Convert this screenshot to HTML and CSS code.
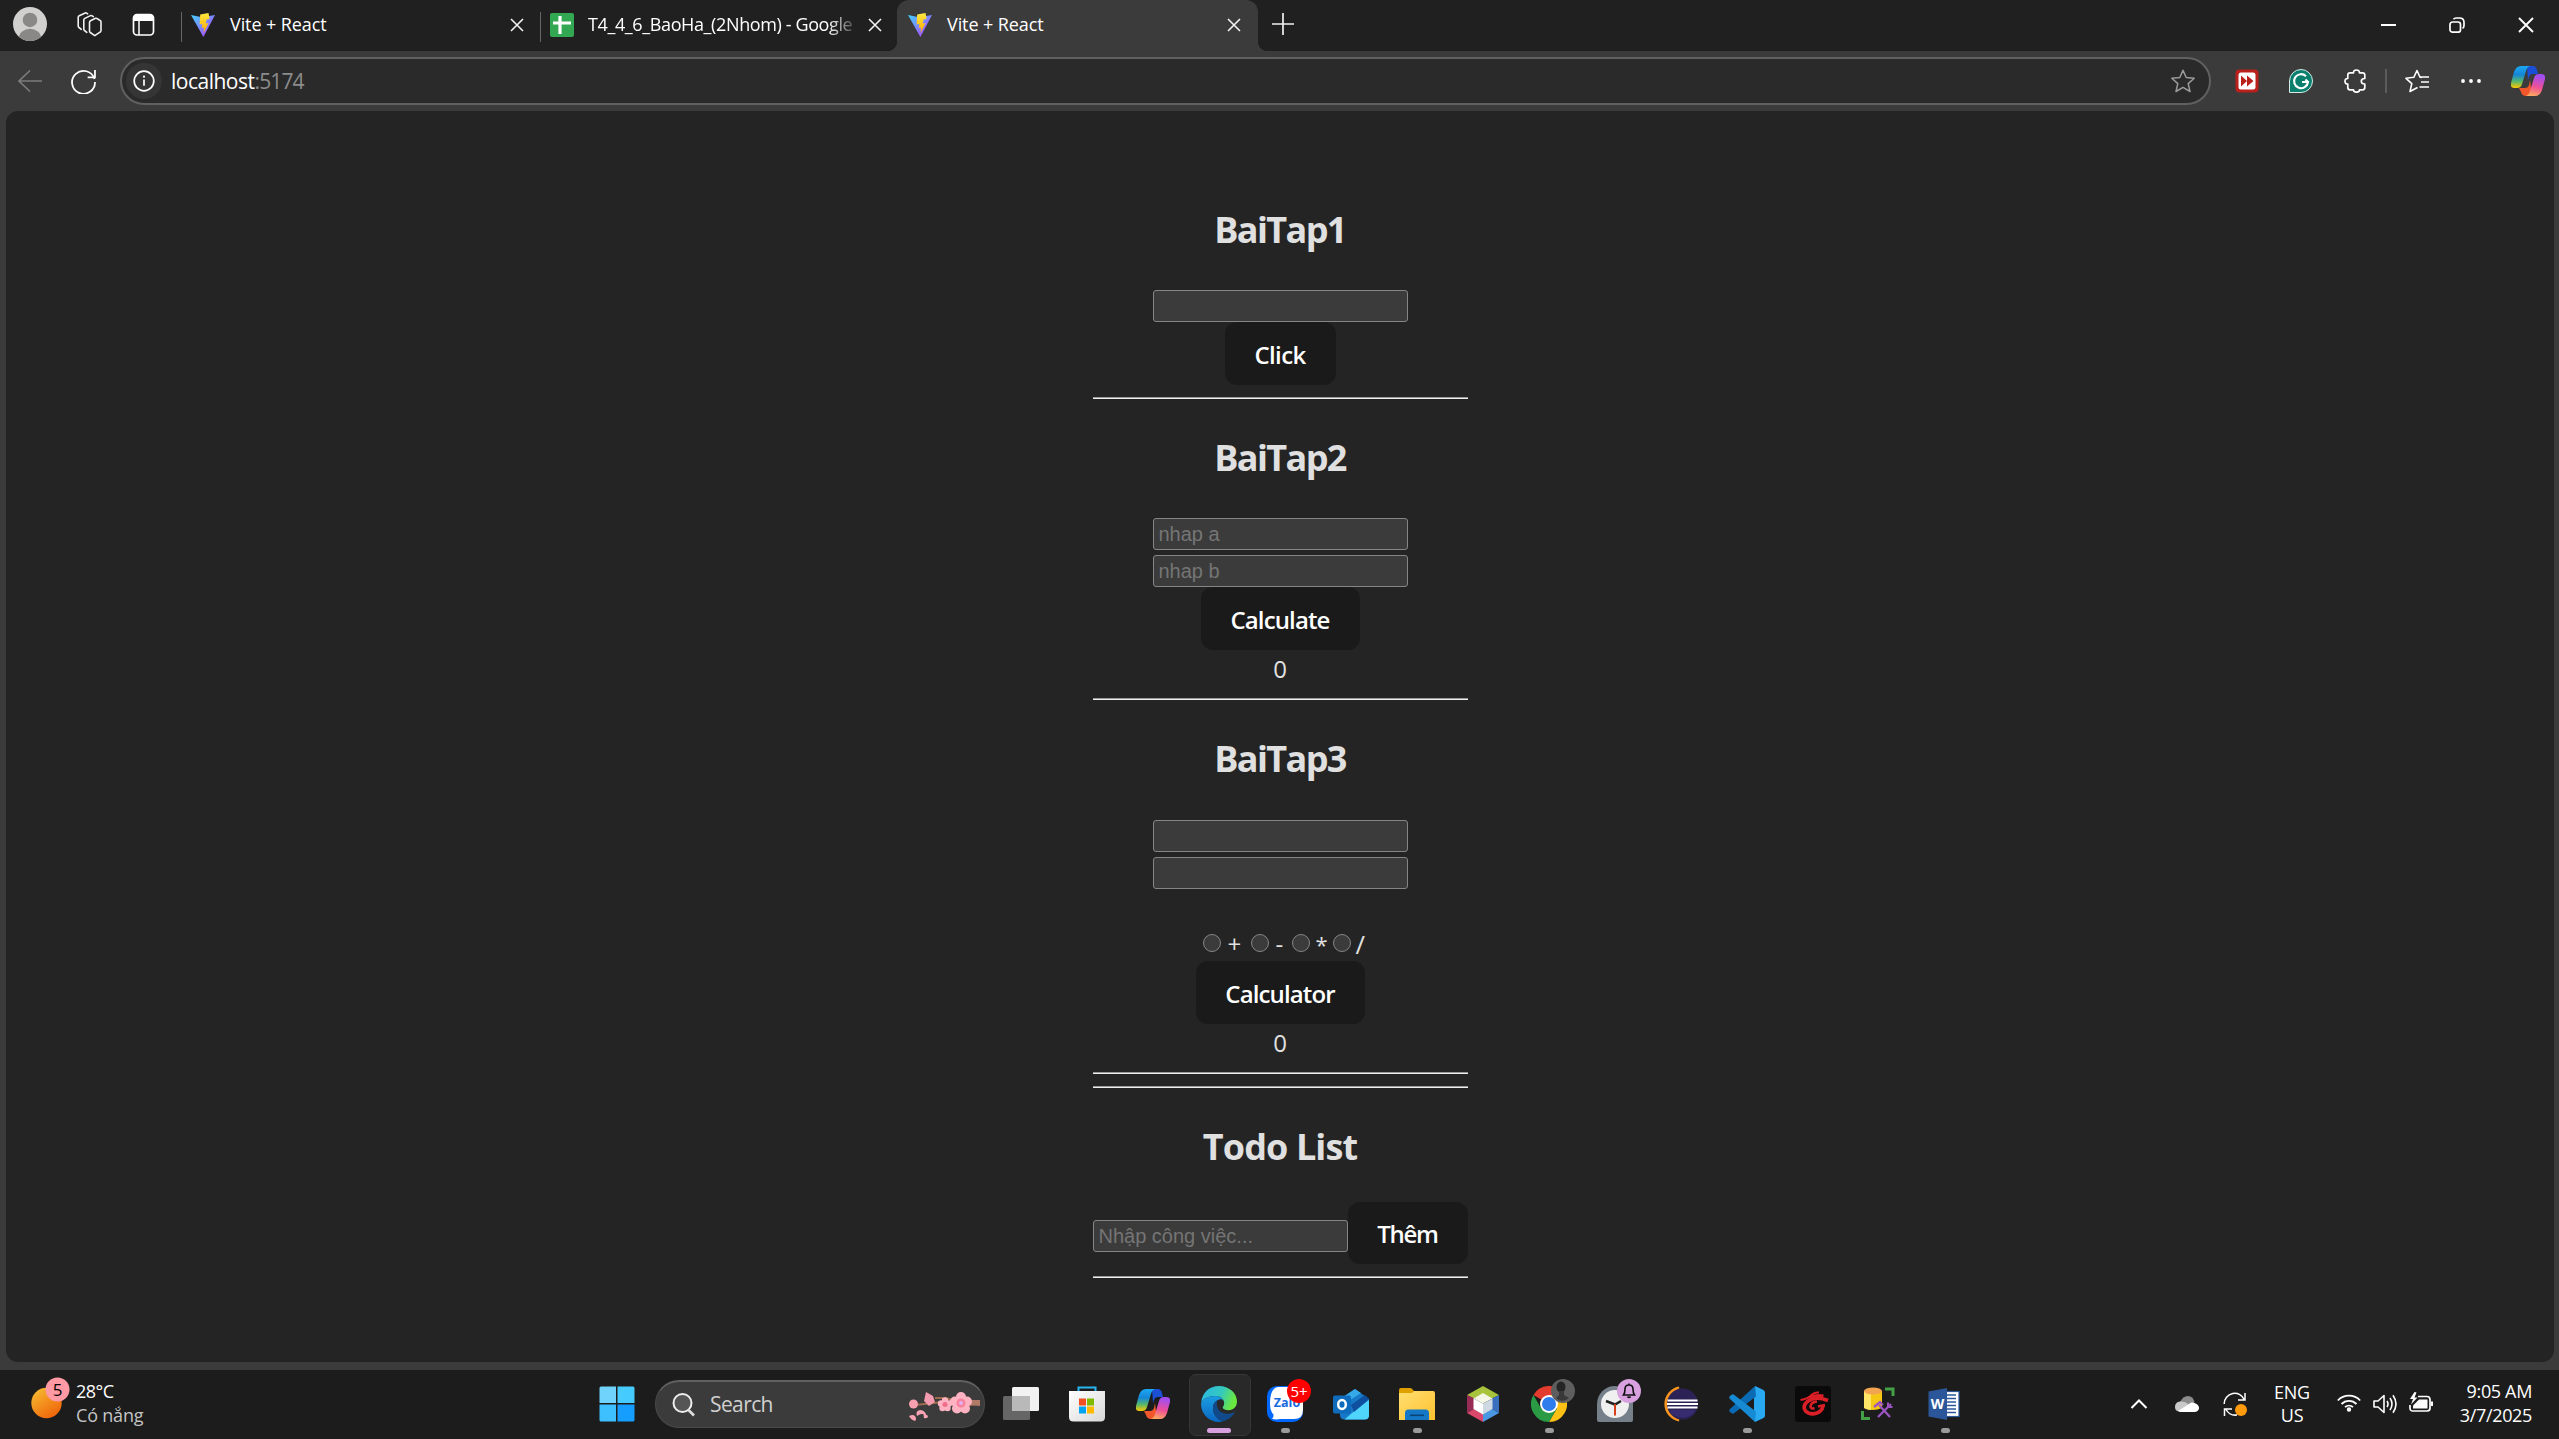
FILE: index.html
```html
<!DOCTYPE html>
<html lang="en">
<head>
<meta charset="utf-8">
<title>Vite + React</title>
<link rel="stylesheet" href="styles.css">
</head>
<body>
<svg class="defs" width="0" height="0">
  <defs>
    <linearGradient id="viteA" x1="0" y1="0" x2="1" y2="1"><stop offset="0" stop-color="#41d1ff"/><stop offset="1" stop-color="#bd34fe"/></linearGradient>
    <linearGradient id="viteB" x1="0" y1="0" x2="0" y2="1"><stop offset="0" stop-color="#ffea3f"/><stop offset="1" stop-color="#ffa800"/></linearGradient>
    <linearGradient id="cpA" x1="0" y1="0" x2="0" y2="1"><stop offset="0" stop-color="#1ba8f2"/><stop offset=".4" stop-color="#1586d8"/><stop offset=".7" stop-color="#57b86b"/><stop offset="1" stop-color="#ffc800"/></linearGradient>
    <linearGradient id="cpB" x1="0.2" y1="0" x2="0" y2="1"><stop offset="0" stop-color="#a24df0"/><stop offset=".5" stop-color="#ee5097"/><stop offset="1" stop-color="#ffb657"/></linearGradient>
    <linearGradient id="edgeA" x1="0" y1="0" x2="1" y2="0.3"><stop offset="0" stop-color="#29b6e8"/><stop offset=".6" stop-color="#35c9bd"/><stop offset="1" stop-color="#69e840"/></linearGradient>
    <linearGradient id="edgeB" x1="0" y1="0" x2="0" y2="1"><stop offset="0" stop-color="#1b9de2"/><stop offset="1" stop-color="#0a67c2"/></linearGradient>
    <linearGradient id="sun" x1="0" y1="0" x2=".7" y2="1"><stop offset="0" stop-color="#f7c234"/><stop offset="1" stop-color="#f0640a"/></linearGradient>
    <linearGradient id="folder" x1="0" y1="0" x2="1" y2="1"><stop offset="0" stop-color="#ffdf72"/><stop offset="1" stop-color="#ffc12e"/></linearGradient>
    <linearGradient id="paper" x1="0" y1="0" x2="1" y2="1"><stop offset="0" stop-color="#fff"/><stop offset="1" stop-color="#d8d8d8"/></linearGradient>
    <symbol id="vite" viewBox="0 0 24 24">
      <path d="M0 2 11 4.200 24 2 12.400 24Z" fill="url(#viteA)"/>
      <path d="M17.500 0 9.200 1.500 8.600 11.500 11.400 11 10.800 15 13 14.500 12.600 20 17.500 10 14.600 10.600 15.600 6.600 18.600 6.100Z" fill="url(#viteB)"/>
    </symbol>
    <symbol id="close" viewBox="0 0 14 14"><path d="M1 1 13 13M13 1 1 13" stroke="#f2f2f2" stroke-width="1.600" fill="none"/></symbol>
    <symbol id="copilot" viewBox="0 0 34 30">
      <path d="M12 0h10q3 0 4 4l1 4h-5q-3 0-4 3l-1 3-1-14Z" fill="#1a4fd6"/>
      <path d="M10 0h9q-3 1-4 5l-4 13q-1 4-5 4H3q-4 0-3-5L3 6Q5 0 10 0Z" fill="url(#cpA)"/>
      <path d="M8 22h6q3 0 4-3l1-5 2 16h-6q-4 0-5-4Z" fill="#f2572c"/>
      <path d="M24 30h-9q3-1 4-5l4-13q1-4 5-4h2q5 0 4 5l-3 11q-2 6-7 6Z" fill="url(#cpB)"/>
    </symbol>
  </defs>
</svg>

<header class="tabstrip">
  <svg class="avatar" viewBox="0 0 34 42" preserveAspectRatio="none"><clipPath id="av"><ellipse cx="17" cy="21" rx="17" ry="21"/></clipPath><g clip-path="url(#av)"><rect width="34" height="42" fill="#d2d0ce"/><ellipse cx="17" cy="16" rx="7.300" ry="9" fill="#8a8886"/><ellipse cx="17" cy="38" rx="11" ry="11" fill="#8a8886"/></g></svg>
  <svg class="workspaces" viewBox="0 0 25 25" fill="none" stroke="#f0f0f0" stroke-width="1.600" stroke-linejoin="round" stroke-linecap="round"><path d="M12.500 10.500Q12.500 9.300 13.500 8.800L18.500 6.300Q19.300 6 20 6.500L23.300 8.700Q24 9.200 24 10V18.500Q24 19.600 23 20.200L18.500 23.200Q17.700 23.700 17 23.100L13.300 20.500Q12.500 20 12.500 19ZM9.800 20.300 7.500 18.500Q6.800 18 6.800 17V8Q6.800 6.900 7.800 6.400L13.500 3.600Q14.300 3.300 15 3.800L16.300 4.600M4.300 17.300 2 15.500Q1.200 15 1.200 14V5.200Q1.200 4.200 2.200 3.700L8.200 1Q9 .7 9.700 1.200L10.600 1.800"/></svg>
  <svg class="tabactions" viewBox="0 0 24 24"><rect x="1.500" y="1.500" width="20" height="20.500" rx="3.500" fill="none" stroke="#fff" stroke-width="1.700"/><path d="M1.500 8V5Q1.500 1.500 5 1.500H18Q21.500 1.500 21.500 5V8Z" fill="#fff"/><path d="M7 8V22" stroke="#fff" stroke-width="1.500"/></svg>
  <i class="divider"></i>
  <div class="tab tab-first"><svg class="fav"><use href="#vite"/></svg><span class="tab-title t-vite">Vite + React</span><svg class="x"><use href="#close"/></svg></div>
  <i class="divider"></i>
  <div class="tab tab-second"><svg class="fav" viewBox="0 0 24 24"><rect width="24" height="24" rx="2" fill="#33a852"/><path d="M10 3V21M3 10H21" stroke="#fff" stroke-width="3.200"/></svg><span class="tab-title fade">T4_4_6_BaoHa_(2Nhom) - Google</span><svg class="x"><use href="#close"/></svg></div>
  <div class="tab active"><svg class="fav"><use href="#vite"/></svg><span class="tab-title t-vite">Vite + React</span><svg class="x"><use href="#close"/></svg></div>
  <svg class="newtab" viewBox="0 0 22 22"><path d="M11 0V22M0 11H22" stroke="#f0f0f0" stroke-width="1.700"/></svg>
  <div class="winctl">
    <svg viewBox="0 0 16 16"><path d="M1 8H16" stroke="#fff" stroke-width="2"/></svg>
    <svg viewBox="0 0 16 16" fill="none" stroke="#fff" stroke-width="1.700"><rect x="1" y="5" width="10.500" height="10.200" rx="2.500"/><path d="M4.500 2.200Q5.500 1 7 1H10.500Q15 1 15 5.500V8.500Q15 10.500 13.500 11.200"/></svg>
    <svg viewBox="0 0 16 16"><path d="M1 1 15 15M15 1 1 15" stroke="#fff" stroke-width="1.900"/></svg>
  </div>
</header>

<nav class="toolbar">
  <svg class="back" viewBox="0 0 24 24"><path d="M24 12H1M12 1.500 1 12 12 22.500" fill="none" stroke="#7c7c7c" stroke-width="1.600"/></svg>
  <svg class="reload" viewBox="0 0 24 24"><path d="M22.500 9.500A11 11 0 1 0 23 12.500M23 1V8H16" fill="none" stroke="#fff" stroke-width="1.700"/></svg>
  <div class="address">
    <span class="info"><svg viewBox="0 0 22 22"><circle cx="11" cy="11" r="9.800" fill="none" stroke="#fff" stroke-width="1.700"/><path d="M11 9.500V15.800" stroke="#fff" stroke-width="1.700"/><circle cx="11" cy="6.700" r="1.100" fill="#fff"/></svg></span>
    <span class="url"><b>localhost</b>:5174</span>
    <svg class="star" viewBox="0 0 24 24"><path d="M12 1.200 15.200 8.500 23.200 9.300 17.200 14.600 19 22.500 12 18.400 5 22.500 6.800 14.600.8 9.300 8.800 8.500Z" fill="none" stroke="#9a9a9a" stroke-width="1.500" stroke-linejoin="round"/></svg>
  </div>
  <svg class="ext e1" viewBox="0 0 24 24"><rect x=".5" y=".5" width="23" height="23" rx="4" fill="#b9201c"/><rect x="3.500" y="3.500" width="17" height="17" rx="2.500" fill="#fff"/><path d="M6 6.500 12 12 6 17.500ZM12 6.500 18.500 12 12 17.500Z" fill="#b9201c"/></svg>
  <svg class="ext e2" viewBox="0 0 24 24"><path d="M.5 23.500V12A11.500 11.500 0 1 1 12 23.500Z" fill="#0a7f6e" stroke="#d5ebe7"/><path d="M17 7.200A7 7 0 1 0 19 13H13M16.500 10.500 19 13" fill="none" stroke="#fff" stroke-width="2.100"/></svg>
  <svg class="ext e3" viewBox="0 0 24 24"><path d="M6 3.800H9.500Q9.500 1 12.500 1T15.500 3.800H18.500Q20.800 3.800 20.800 6V9.500Q17.300 9.500 17.300 12.200T20.800 15V18.500Q20.800 20.800 18.500 20.800H15.500Q15.500 23.200 12.500 23.200T9.500 20.800H6Q3.800 20.800 3.800 18.500V15Q1 15 1 12.200T3.800 9.500V6Q3.800 3.800 6 3.800Z" fill="none" stroke="#fff" stroke-width="1.700" stroke-linejoin="round"/></svg>
  <i class="sep"></i>
  <svg class="ext e4" viewBox="0 0 24 24"><path d="M17 8.400 15 8.300 12 1.500 8.800 8.300 1 9.300 6.800 14.600 5 22.500 12.500 18.500M14.500 8H24M16 13H24M14.500 18H24" fill="none" stroke="#fff" stroke-width="1.600" stroke-linejoin="round"/></svg>
  <svg class="ext e5" viewBox="0 0 24 24" fill="#fff"><circle cx="4" cy="12" r="1.900"/><circle cx="12" cy="12" r="1.900"/><circle cx="20" cy="12" r="1.900"/></svg>
  <svg class="cp"><use href="#copilot"/></svg>
</nav>

<div class="frame">
  <main class="page">
    <div class="column">
      <section>
        <h2>BaiTap1</h2>
        <input type="text">
        <button class="b1">Click</button>
      </section>
      <hr>
      <section>
        <h2>BaiTap2</h2>
        <input type="text" placeholder="nhap a">
        <input type="text" placeholder="nhap b" class="next">
        <button class="b2">Calculate</button>
        <output>0</output>
      </section>
      <hr>
      <section>
        <h2 class="tall">BaiTap3</h2>
        <input type="text">
        <input type="text" class="next">
        <div class="ops">
          <label class="o1"><i></i><span>+</span></label><label class="o2"><i></i><span>-</span></label><label class="o3"><i></i><span>*</span></label><label class="o4"><i></i><span>/</span></label>
        </div>
        <button class="b3">Calculator</button>
        <output>0</output>
      </section>
      <hr>
      <hr class="second">
      <section>
        <h2 class="todo">Todo List</h2>
        <div class="row"><input type="text" placeholder="Nhập công việc..."><button class="b4">Thêm</button></div>
      </section>
      <hr>
    </div>
  </main>
</div>

<footer class="taskbar">
  <div class="weather">
    <svg viewBox="0 0 40 46"><circle cx="15.500" cy="28" r="15.200" fill="url(#sun)"/><circle cx="26.500" cy="14.500" r="12" fill="#ff99a4"/><text x="26.500" y="20.500" text-anchor="middle" font-size="17">5</text></svg>
    <div class="two"><span class="w1">28°C</span><span class="w2">Có nắng</span></div>
  </div>
  <div class="apps">
    <span class="app"><svg viewBox="0 0 36 36"><path d="M.5 2q0-1.500 1.500-1.500H17V17H.5Z" fill="#6fd3fb"/><path d="M18.500.5H34q1.500 0 1.500 1.500V17H18.500Z" fill="#45cbfd"/><path d="M.5 18.500H17V35.500H2q-1.500 0-1.500-1.500Z" fill="#3dc0fd"/><path d="M18.500 18.500h17V34q0 1.500-1.500 1.500H18.500Z" fill="#159efe"/></svg></span>
    <div class="search">
      <svg class="glass" viewBox="0 0 24 24"><circle cx="10.500" cy="10" r="9" fill="#555" stroke="#eee" stroke-width="2"/><path d="M16.500 17 22 22.500" stroke="#ddd" stroke-width="2.600"/></svg>
      <span>Search</span>
      <svg class="sakura" viewBox="0 0 72 30">
        <path d="M71 9 52 10 36 6 26 6M52 10 34 10 6 13M71 12 60 13" stroke="#9d6a4c" stroke-width="2.200" fill="none"/><path d="M61 8H71V14L61 13Z" fill="#b07a66"/>
        <circle cx="4.500" cy="12" r="4.500" fill="#f6a0b0"/><path d="M17 0 24 4 26 10 20 14 15 9Z" fill="#f49bb0"/>
        <g fill="#ffb3c2"><circle cx="36" cy="8.500" r="3.200"/><circle cx="40" cy="11.500" r="3.200"/><circle cx="38.500" cy="16" r="3.200"/><circle cx="33.500" cy="16" r="3.200"/><circle cx="32" cy="11.500" r="3.200"/></g><circle cx="36" cy="12.500" r="2.500" fill="#f26d8a"/>
        <g fill="#ffb3c2"><circle cx="52" cy="5" r="5"/><circle cx="58" cy="9.500" r="5"/><circle cx="56" cy="16.500" r="5"/><circle cx="48" cy="16.500" r="5"/><circle cx="46" cy="9.500" r="5"/></g><circle cx="52" cy="11" r="4.500" fill="#f9819b"/><circle cx="52" cy="11" r="2" fill="#e4b0f4"/>
        <path d="M8 24q-2-5 3-6 4 0 6 4-5-1-9 2ZM14 20l5 4q0 3-4 2ZM0 24q4-2 6 0 2 3 0 5-4-1-6-5Z" fill="#f7a3b4"/>
      </svg>
    </div>
    <span class="app"><svg viewBox="0 0 36 36"><rect x="0" y="10" width="27" height="24" rx="1.500" fill="#666"/><rect x="9" y="1" width="27" height="24" rx="1.500" fill="#f2f2f2"/><path d="M9 10H27V25H9Z" fill="#b9b9b9"/></svg></span>
    <span class="app"><svg viewBox="0 0 36 36"><path d="M9.500 7V1.500H26.500V7" fill="none" stroke="#26b5f0" stroke-width="2"/><path d="M0 5H36V31q0 4.500-4.500 4.500H4.500Q0 35.500 0 31Z" fill="url(#paper)"/><rect x="10" y="12.500" width="7" height="7" fill="#f25022"/><rect x="18" y="12.500" width="7" height="7" fill="#7fba00"/><rect x="10" y="20.500" width="7" height="7" fill="#00a4ef"/><rect x="18" y="20.500" width="7" height="7" fill="#ffb900"/></svg></span>
    <span class="app"><svg class="cp"><use href="#copilot"/></svg></span>
    <span class="app current"><svg viewBox="0 0 36 36">
      <path d="M.2 16.500C1 6.500 8.500 0 18 0 28 0 36 7 36 15.500c0 5-3.500 8.700-8.300 8.700-4 0-6-1.500-6-2.700 0-1 1.500-1.600 1.500-4.500 0-3.500-3.500-7-8.700-7C7 10 2 13 .2 16.500Z" fill="url(#edgeA)"/>
      <path d="M.2 16.500C2 13 7 10 14.500 10c3.500 0 6.500 1.800 7.800 4.300-1.300-.9-2.800-1.100-4-.8-3 .8-6.300 3.500-6.300 8.500 0 6 4 12 10 13.300-1.300.5-2.700.7-4 .7C8 36 0 28 0 18Z" fill="url(#edgeB)"/>
      <path d="M16.500 14.300C13.500 15.500 12 18.500 12 22c0 6 4 12 10 13.300 5-1.300 9-4.300 11.500-8.300.4-.8-.3-1-.8-.8-2.700 1.300-5.400 1.800-7.700 1.500C18.500 27 14 21.500 16.500 14.300Z" fill="#114a8b"/></svg><i class="bar"></i></span>
    <span class="app"><svg viewBox="0 0 36 36"><rect width="36" height="36" rx="10" fill="#0068ff"/><path d="M12 1H27Q36 1 36 10V24Q36 33 27 33H13Q8 34 5 32.500 7 30.500 6.500 28.500 3 25 3 18 3 1 12 1Z" fill="#fff"/><text x="20" y="21" text-anchor="middle" font-size="12.500" font-weight="700" fill="#1769e0">Zalo</text></svg><i class="dot"></i><b class="badge red">5+</b></span>
    <span class="app"><svg viewBox="0 0 36 36"><path d="M7 13 22 3 36 13V29q0 4.500-4.500 4.500H11.500Q7 33.500 7 29Z" fill="#1778c8"/><path d="M7 13 22 3l6 4-17 11Z" fill="#35a9e8"/><path d="M36 14V29q0 4.500-4.500 4.500H11.500L19 27Z" fill="#4fd4fb"/><path d="M18 19 32 9l4 4-15 13Z" fill="#0f4f9f"/><rect x="0" y="9.500" width="18" height="18" rx="2" fill="#0f6cbd"/><ellipse cx="9" cy="18.500" rx="3.800" ry="4.500" fill="none" stroke="#fff" stroke-width="2.500"/></svg></span>
    <span class="app"><svg viewBox="0 0 36 36"><path d="M0 4q0-2 2-2h9q2 0 3 2l3 3H0Z" fill="#e0a000"/><path d="M0 7H12q2 0 3-2h19q2 0 2 2V34H0Z" fill="url(#folder)"/><path d="M6 34V27q0-3.500 3.500-3.500h17q3.500 0 3.500 3.500v7Z" fill="#1478c6"/><path d="M11 29.300H25" stroke="#0a4273" stroke-width="1.600"/></svg><i class="dot"></i></span>
    <span class="app"><svg viewBox="0 0 36 36"><path d="M18 0 34 9 27 12.500 18 8 9 12.500 2 9Z" fill="#a8c43c"/><path d="M2 9 9 12.500V23L2 27Z" fill="#962c55"/><path d="M2 27 9 23 18 28V36Z" fill="#d9486a"/><path d="M34 9V27L27 23V12.500Z" fill="#3a6fc0"/><path d="M34 27 18 36V28L27 23Z" fill="#4a97e2"/><path d="M18 7 27.500 12.500 18 17.500 8.500 12.500Z" fill="#f4f6e6"/><path d="M8.500 12.500 18 17.500V28.500L8.500 23Z" fill="#fff"/><path d="M27.500 12.500 18 17.500V28.500L27.500 23Z" fill="#ced9e4"/></svg></span>
    <span class="app"><svg viewBox="0 0 36 36"><path d="M18 18 2.400 9A18 18 0 0 1 33.600 9H18Z" fill="#e33b2e"/><path d="M18 9H33.600A18 18 0 0 1 18 36L25.800 22.500Z" fill="#fdc014"/><path d="M2.400 9A18 18 0 0 0 18 36L25.800 22.500 10.200 22.500Z" fill="#2b9a45"/><circle cx="18" cy="18" r="9" fill="#fff"/><circle cx="18" cy="18" r="7" fill="#2f7cec"/></svg><i class="dot"></i><b class="badge grey"><svg viewBox="0 0 24 24"><ellipse cx="10" cy="8" rx="4.500" ry="5.500" fill="#252525"/><path d="M8 12h5v4l5 3q-7 6-13 0l3-3Z" fill="#393939"/></svg></b></span>
    <span class="app"><svg viewBox="0 0 36 36"><path d="M0 18A18 18 0 0 1 18 0Q36 1 36 18V34q0 2-2 2H2q-2 0-2-2Z" fill="#75808b"/><circle cx="18" cy="18" r="14" fill="#f0f0f0"/><path d="M9 15 18 18.500 24 15" fill="none" stroke="#222" stroke-width="2.500"/><path d="M18 18V29.500" stroke="#d8401a" stroke-width="2"/></svg><b class="badge lilac"><svg viewBox="0 0 24 24"><path d="M6.500 16Q8 14 8 10 8 6 12 6T16 10Q16 14 17.500 16ZM10.500 17.500Q12 19.500 13.500 17.500M12 6V4.500" fill="none" stroke="#111" stroke-width="1.600"/></svg></b></span>
    <span class="app"><svg viewBox="0 0 36 36"><path d="M16 1.500A16.800 16.800 0 0 0 16 34.500 19 19 0 0 1 16 1.500Z" fill="#f7941e" stroke="#f7941e" stroke-width="2"/><circle cx="19.500" cy="18" r="15.500" fill="#2c2255"/><path d="M8.500 28Q19.500 35 30.500 28L32 24H7Z" fill="#41368a" opacity=".5"/><path d="M4.500 14.500H34.500M4 18H35M4.500 21.500H34.500" stroke="#fff" stroke-width="1.800"/></svg></span>
    <span class="app"><svg viewBox="0 0 36 36"><path d="M26 0 34.500 4Q36 5 36 6.500V29.500Q36 31 34.500 32L26 36 25 26V10Z" fill="#29a9f2"/><path d="M26 0 1 23Q-.5 24.500 1 26L3 27.500Q4 28 5 27.300L27 10.500Z" fill="#0a6ab4"/><path d="M26 36 1 13Q-.5 11.500 1 10L3 8.500Q4 8 5 8.700L27 25.500Z" fill="#168bd4"/></svg><i class="dot"></i></span>
    <span class="app"><svg viewBox="0 0 36 36"><rect width="36" height="36" rx="3" fill="#0a0a0a"/><g fill="none" stroke="#da1f26"><path d="M5.500 14Q13 13 17 8.500 20 6 24 6.500" stroke-width="2"/><path d="M28.500 10Q20 8.500 13.500 12" stroke-width="3"/><path d="M33 14.500Q20 9.500 12.500 15.500 7 20 10.500 25 15 29.500 22 27 27.500 25 28 19.500" stroke-width="3.600"/><path d="M30 19 23 20.500M22 15.500Q16 16 15.500 20.500 16 23.500 19.500 22" stroke-width="2.600"/></g></svg></span>
    <span class="app"><svg viewBox="0 0 36 36"><path d="M3 5V22Q12 26 21 22V5Z" fill="#f5c816"/><path d="M3 5V22Q6 24 10 24V5Z" fill="#ffe567"/><ellipse cx="12" cy="5" rx="9" ry="3.500" fill="#f2a450"/><path d="M24 3H32V10M1.500 25V32.500H9" fill="none" stroke="#43a047" stroke-width="3"/><path d="M18 19 29 31M30 18 17 31M13 21 19 16 22 19" fill="none" stroke="#9a54c0" stroke-width="2.300"/><path d="M27 16.500v4.500h4.500" fill="none" stroke="#9a54c0" stroke-width="2"/></svg></span>
    <span class="app"><svg viewBox="0 0 36 36"><rect x="17" y="5.500" width="15" height="25" fill="#fff" stroke="#2b579a" stroke-width="1.200"/><path d="M18 9H29M18 12.500H29M18 16H29M18 19.500H29M18 23H29M18 26.500H29" stroke="#2b579a" stroke-width="1.500"/><path d="M1.500 5.500 20 2V34L1.500 30.500Z" fill="#2b579a"/><text x="10.500" y="23" text-anchor="middle" font-size="14" font-weight="700" fill="#fff">W</text></svg><i class="dot"></i></span>
  </div>
  <div class="tray">
    <svg class="chev" viewBox="0 0 18 10"><path d="M1.500 9 9 1.500 16.500 9" fill="none" stroke="#fff" stroke-width="2"/></svg>
    <svg class="cloud" viewBox="0 0 24 16"><path d="M5 6Q8 0 13 0T19.500 6L12 12Z" fill="#8b8b8b"/><path d="M0 11Q0 6 5 5.500T14 8.500L4 15.500Q0 15 0 11Z" fill="#c9c9c9"/><path d="M3 15 14 8Q17 5.500 20.500 7.500 24 9 24 12T20 16H5Z" fill="#fff"/></svg>
    <svg class="sync" viewBox="0 0 24 24"><path d="M1.200 12A10.500 10.500 0 0 1 21.500 8M22 1V8H15M14 23A11 11 0 0 1 3 17.500M1.500 24V17H9" fill="none" stroke="#fff" stroke-width="1.500"/><circle cx="18" cy="18" r="6" fill="#ff9a0b"/></svg>
    <div class="two lang"><span>ENG</span><span>US</span></div>
    <svg class="wifi" viewBox="0 0 24 18" fill="none" stroke="#fff" stroke-width="1.800"><path d="M.8 6.500A15.500 15.500 0 0 1 23.200 6.500M4.500 10A10.500 10.500 0 0 1 19.500 10M8 13.200A6 6 0 0 1 16 13.200"/><circle cx="12" cy="15.500" r="1.300" fill="#fff"/></svg>
    <svg class="vol" viewBox="0 0 24 20" fill="none" stroke="#fff" stroke-width="1.600" stroke-linejoin="round"><path d="M1 7H5L11 1.500V18.500L5 13H1ZM14 7Q16 10 14 13M17 4Q21 10 17 16M20 1.200Q26 10 20 18.800"/></svg>
    <svg class="bat" viewBox="0 0 24 21"><path d="M9 4.500H18Q21 4.500 21 7.500V16Q21 19 18 19H4Q1 19 1 16V13" fill="none" stroke="#fff" stroke-width="1.700"/><path d="M10 7.500H18.500V16.500H4V13.500Z" fill="#fff"/><path d="M22 9.500h2v4.500h-2zM5.500 0 1 7H4L2 12.500 8.500 5.500H5.500L7.500.5Z" fill="#fff"/></svg>
    <div class="two clock"><span>9:05 AM</span><span>3/7/2025</span></div>
  </div>
</footer>
</body>
</html>
```
FILE: styles.css
```css
* { box-sizing: border-box; }

body {
  margin: 0;
  width: 2559px;
  height: 1439px;
  overflow: hidden;
  display: flex;
  flex-direction: column;
  background: #3b3b3b;
  color: #fff;
  font-family: "Open Sans", "Noto Sans", sans-serif;
  font-size: 18px;
}

svg { display: block; flex: none; }
.defs { position: absolute; }

/* Tab strip */
.tabstrip { height: 51px; flex: none; display: flex; align-items: flex-start; background: #202020; }
.avatar { width: 34px; height: 34px; margin: 7px 0 0 13px; }
.workspaces { width: 25px; height: 25px; margin: 12px 0 0 30px; }
.tabactions { width: 24px; height: 24px; margin: 13px 0 0 30px; }
.divider { width: 1px; height: 30px; margin-top: 12px; background: #666; flex: none; }
.tabactions + .divider { margin-left: 25px; }
.tab { height: 51px; display: flex; align-items: flex-start; position: relative; flex: none; }
.tab-first { width: 358px; padding-left: 9px; }
.tab-second { width: 356px; padding-left: 9px; }
.active { width: 361px; padding-left: 11px; background: #3b3b3b; border-radius: 12px 12px 0 0; }
.active::before, .active::after { content: ""; position: absolute; bottom: 0; width: 10px; height: 10px; }
.active::before { left: -10px; background: radial-gradient(circle at 0 0, transparent 10px, #3b3b3b 10.500px); }
.active::after { right: -10px; background: radial-gradient(circle at 100% 0, transparent 10px, #3b3b3b 10.500px); }
.fav { width: 24px; height: 24px; margin-top: 13px; }
.tab-title { width: 266px; margin: 11px 0 0 15px; line-height: 26px; white-space: nowrap; }
.t-vite { letter-spacing: -.1px; }
.fade { margin-left: 14px; width: 267px; letter-spacing: -.38px; -webkit-mask-image: linear-gradient(90deg, #000 240px, transparent 272px); mask-image: linear-gradient(90deg, #000 240px, transparent 272px); }
.x { width: 14px; height: 14px; margin: 18px 0 0 14px; }
.fade + .x { margin-left: 13px; }
.newtab { width: 22px; height: 22px; margin: 13px 0 0 14px; }
.winctl { margin: 17px 25px 0 auto; display: flex; gap: 53px; }
.winctl svg { width: 16px; height: 16px; }

/* Toolbar */
.toolbar { height: 60px; flex: none; display: flex; align-items: center; }
.back { width: 24px; height: 24px; margin-left: 18px; }
.reload { width: 25px; height: 25px; margin-left: 29px; }
.address { width: 2091px; height: 48px; margin-left: 24px; border: 2px solid #606060; border-radius: 24px; background: #2a2a2a; display: flex; align-items: center; }
.info { width: 36px; height: 36px; margin-left: 4px; border-radius: 50%; background: #353535; display: grid; place-items: center; }
.info svg { width: 22px; height: 22px; }
.url { margin-left: 9px; font-size: 21px; color: #8c8c8c; line-height: 30px; letter-spacing: -.85px; }
.url b { font-weight: 400; color: #fff; letter-spacing: -.5px; }
.star { width: 24px; height: 24px; margin: 0 14px 0 auto; }
.ext { width: 24px; height: 24px; }
.e1 { margin-left: 24px; }
.e2 { margin-left: 30px; }
.e3 { margin-left: 31px; }
.sep { width: 2px; height: 24px; margin-left: 17px; background: #5c5c5c; }
.e4 { margin-left: 18px; }
.e5 { margin-left: 30px; }
.cp { width: 34px; height: 30px; }
.toolbar .cp { margin-left: 28px; }

/* Page */
.frame { height: 1259px; flex: none; padding: 0 5px 8px 6px; }
.page { height: 1251px; border-radius: 12px; background: #242424; display: flex; justify-content: center; padding-top: 94px; }
.column { width: 375px; }
section { display: flex; flex-direction: column; align-items: center; }
h2 { margin: 0 0 37px; padding-top: 2px; font-size: 36px; line-height: 46px; font-weight: 700; color: #e0e0e0; white-space: nowrap; letter-spacing: -1.600px; }
h2.tall { margin-bottom: 38px; }
h2.todo { margin-bottom: 32px; letter-spacing: -.9px; }
hr { margin: 12px 0 34px; height: 2px; border: 0; border-top: 1px solid #9a9a9a; background: #eee; }
hr:has(+ .second) { margin-bottom: 12px; }
input[type="text"] { width: 255px; height: 32px; padding: 1px 5px 1px 5px; border: 1px solid #858585; border-radius: 3px; background: #3b3b3b; font: 20px "Liberation Sans", Arial, sans-serif; color: #fff; }
input::placeholder { color: #757575; opacity: 1; }
.next { margin-top: 5px; }
button { height: 63px; padding: 2px 0 0; border: 0; border-radius: 12px; background: #1a1a1a; color: #fff; font: 600 24px/34px "Open Sans", "Noto Sans", sans-serif; letter-spacing: -.87px; }
.b1 { width: 111px; letter-spacing: -.65px; }
.b2 { width: 159px; }
.b3 { width: 169px; }
.b4 { width: 120px; height: 62px; letter-spacing: -1.300px; }
output { height: 36px; line-height: 38px; font-size: 24px; color: #e0e0e0; }
.ops { display: flex; width: 155px; height: 36px; margin-top: 36px; font-size: 24px; line-height: 36px; color: #e0e0e0; }
label { display: flex; align-items: center; flex: none; }
label i { flex: none; width: 18px; height: 18px; margin-right: 7px; border: 1.500px solid #858585; border-radius: 50%; background: #3b3b3b; }
label span { padding-top: 1px; }
.o1 { width: 48px; }
.o2, .o3 { width: 41px; }
.o3 i { margin-right: 6px; }
.o3 span { font-size: 22px; }
.o4 { width: 25px; }
.o4 i { margin-right: 5px; }
.o4 span { font-size: 26px; }
.row { display: flex; align-items: flex-start; }
.row input { margin-top: 18px; }

/* Taskbar */
.taskbar { height: 69px; flex: none; display: flex; align-items: flex-start; background: #1c1c1c; }
.taskbar text { font-family: "Open Sans", sans-serif; }
.weather { width: 584px; display: flex; padding: 5px 0 0 31px; }
.weather > svg { width: 40px; height: 46px; }
.two { display: flex; flex-direction: column; line-height: 24px; white-space: nowrap; }
.weather .two { margin-left: 5px; padding-top: 4px; }
.w1 { letter-spacing: -.5px; }
.w2 { color: #c4c4c4; letter-spacing: -.2px; }
.apps { display: flex; }
.app { width: 66px; height: 69px; padding: 16px 15px; position: relative; }
.app > svg { width: 36px; height: 36px; }
.app > svg.cp { width: 34px; height: 30px; margin: 3px 1px; }
.search { width: 330px; height: 48px; margin: 10px 3px 0 5px; border: 1px solid #4a4a4a; border-top: 2px solid #606060; border-radius: 24px; background: #3b3b3b; display: flex; align-items: center; font-size: 21px; color: #d0d0d0; }
.glass { width: 24px; height: 24px; margin-left: 16px; }
.search span { margin: -1px 0 0 14px; letter-spacing: -.6px; }
.sakura { width: 72px; height: 30px; margin: 4px 3px 0 auto; }
.current::before { content: ""; position: absolute; left: 3px; top: 4px; width: 60px; height: 60px; border: 1px solid #363636; border-radius: 7px; background: #292929; z-index: -1; }
.current { z-index: 0; }
.bar, .dot { position: absolute; top: 58px; height: 5px; border-radius: 3px; }
.bar { left: 21px; width: 24px; background: #d9a0e0; }
.dot { left: 29px; width: 9px; background: #9a9a9a; }
.badge { position: absolute; left: 35px; top: 9px; width: 24px; height: 24px; border-radius: 50%; text-align: center; font-size: 15px; line-height: 24px; font-weight: 400; }
.badge svg { width: 24px; height: 24px; }
.red { background: #f00; }
.grey { background: #5e5e5e; }
.lilac { background: #d9a0e0; }
.tray { margin-left: auto; padding-right: 27px; display: flex; align-items: flex-start; }
.chev { width: 18px; height: 10px; margin-top: 29px; }
.cloud { width: 24px; height: 16px; margin: 26px 0 0 27px; }
.sync { width: 24px; height: 24px; margin: 22px 0 0 24px; }
.lang { width: 50px; margin: 11px 0 0 20px; align-items: center; line-height: 23px; letter-spacing: -.2px; }
.wifi { width: 24px; height: 18px; margin: 24px 0 0 20px; }
.vol { width: 24px; height: 20px; margin: 24px 0 0 12px; }
.bat { width: 24px; height: 21px; margin: 22px 0 0 12px; }
.clock { width: 99px; margin-top: 9px; align-items: flex-end; letter-spacing: -.35px; }
```
